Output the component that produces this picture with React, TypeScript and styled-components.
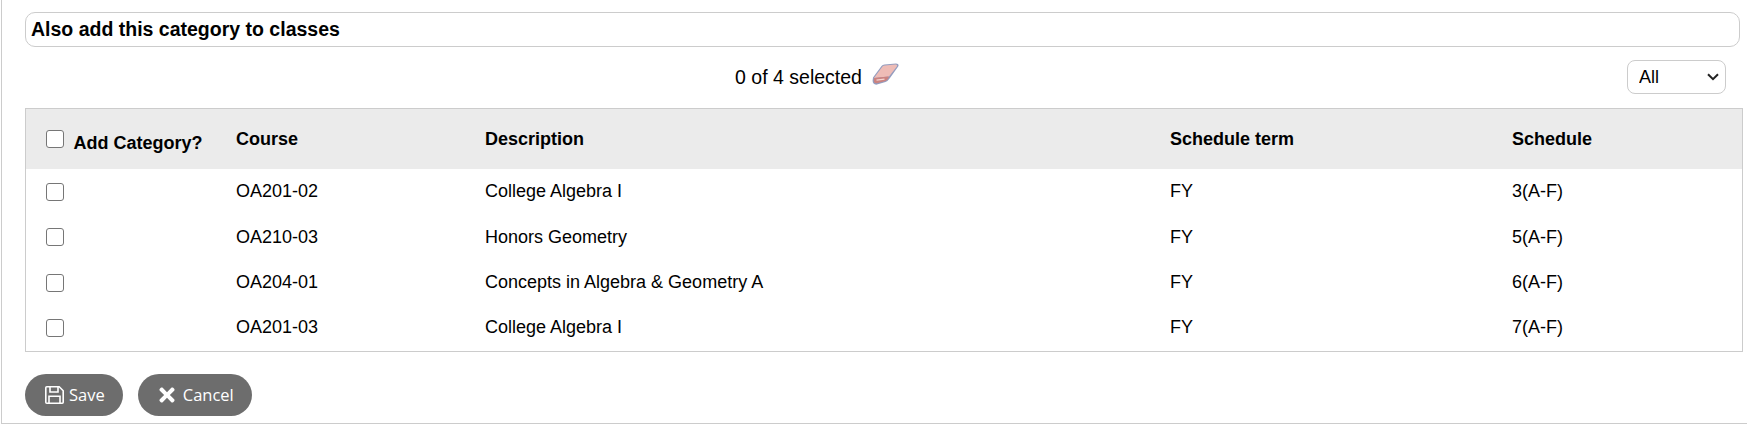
import React from 'react';
import styled, { createGlobalStyle } from 'styled-components';
import { FaTimes } from 'react-icons/fa';

const classes = [
  { course: 'OA201-02', description: 'College Algebra I', term: 'FY', schedule: '3(A-F)' },
  { course: 'OA210-03', description: 'Honors Geometry', term: 'FY', schedule: '5(A-F)' },
  { course: 'OA204-01', description: 'Concepts in Algebra & Geometry A', term: 'FY', schedule: '6(A-F)' },
  { course: 'OA201-03', description: 'College Algebra I', term: 'FY', schedule: '7(A-F)' },
];

const EraserIcon = () => (
  <svg width="27" height="22" viewBox="0 0 27 22" aria-hidden="true">
    <path d="M1 14.5 L9.5 3 Q10.5 1.5 12.5 1.4 L24 .4 Q27.6 .4 26.2 3.6 L18 15 Q16 18 13.5 19 L5 21.6 Q.6 22 .6 17.5 Z" fill="#949dbf" />
    <path d="M2 15 L10.5 3.6 Q11.3 2.6 13 2.5 L23.6 1.6 Q25.6 1.6 24.8 3.6 L17 13.4 Z" fill="#eebcb6" />
    <path d="M2 15 L16 13.6 Q17.4 13.6 16.6 15 L15 17 Q14 18 12.5 18.3 L4.8 20.2 Q1.8 20.4 1.8 18 Z" fill="#cc8380" />
    <path d="M4.5 17.2 L12.5 16.2" stroke="#f4d6d2" strokeWidth="1.3" fill="none" />
  </svg>
);

const ChevronIcon = () => (
  <svg width="12" height="8" viewBox="0 0 12 8" aria-hidden="true">
    <path d="M1 1.2 L6 6.2 L11 1.2" stroke="#222" strokeWidth="2" fill="none" />
  </svg>
);

const SaveIcon = () => (
  <svg width="19" height="18" viewBox="0 0 19 18" aria-hidden="true" fill="none" stroke="#fff" strokeWidth="1.6">
    <path d="M1.8.8 H14.2 L18.2 4.8 V16.2 Q18.2 17.2 17.2 17.2 H1.8 Q.8 17.2 .8 16.2 V1.8 Q.8 .8 1.8 .8 Z" />
    <path d="M5 1 V6 H13 V1" />
    <path d="M4 17 V10.2 H15 V17" />
  </svg>
);

const App = () => {
  return (
    <>
      <GlobalStyle />
      <Page>
        <SectionTitle>Also add this category to classes</SectionTitle>
        <SelectionBar>
          <SelectionCount>
            0 of 4 selected
            <EraserButton>
              <EraserIcon />
            </EraserButton>
          </SelectionCount>
          <FilterWrap>
            <FilterSelect defaultValue="All">
              <option>All</option>
              <option>Selected</option>
            </FilterSelect>
            <FilterArrow>
              <ChevronIcon />
            </FilterArrow>
          </FilterWrap>
        </SelectionBar>
        <TableFrame>
          <ClassTable>
            <colgroup>
              <col style={{ width: 190 }} />
              <col style={{ width: 249 }} />
              <col style={{ width: 685 }} />
              <col style={{ width: 342 }} />
              <col />
            </colgroup>
            <thead>
              <tr>
                <HeadCell>
                  <RowCheck type="checkbox" />
                  <AddLabel>Add Category?</AddLabel>
                </HeadCell>
                <HeadCell>Course</HeadCell>
                <HeadCell>Description</HeadCell>
                <HeadCell>Schedule term</HeadCell>
                <HeadCell>Schedule</HeadCell>
              </tr>
            </thead>
            <tbody>
              {classes.map((item) => (
                <tr key={item.course}>
                  <BodyCell>
                    <RowCheck type="checkbox" />
                  </BodyCell>
                  <BodyCell>{item.course}</BodyCell>
                  <BodyCell>{item.description}</BodyCell>
                  <BodyCell>{item.term}</BodyCell>
                  <BodyCell>{item.schedule}</BodyCell>
                </tr>
              ))}
            </tbody>
          </ClassTable>
        </TableFrame>
        <Actions>
          <PillButton>
            <SaveIcon />
            Save
          </PillButton>
          <PillButton>
            <FaTimes size={22} />
            Cancel
          </PillButton>
        </Actions>
      </Page>
    </>
  );
};

export default App;

// Styled Components

const GlobalStyle = createGlobalStyle`
  html, body {
    margin: 0;
    background: #fff;
    font-family: "Liberation Sans", Arial, sans-serif;
    color: #000;
  }
`;

const Page = styled.div`
  margin-left: 1px;
  height: 424px;
  box-sizing: border-box;
  border-left: 1px solid #ccc;
  border-bottom: 1px solid #ccc;
  padding: 12px 4px 0 23px;
`;

const SectionTitle = styled.div`
  box-sizing: border-box;
  height: 35px;
  margin-right: 3px;
  padding-left: 5px;
  border: 1px solid #ccc;
  border-radius: 10px;
  font-size: 19.5px;
  font-weight: bold;
  line-height: 33px;
`;

const SelectionBar = styled.div`
  display: flex;
  align-items: flex-start;
  height: 61px;
  padding-right: 17px;
`;

const SelectionCount = styled.div`
  flex: 1;
  display: flex;
  align-items: center;
  justify-content: center;
  height: 61px;
  padding-right: 18px;
  font-size: 19.5px;
`;

const EraserButton = styled.span`
  display: flex;
  margin: -7px 0 0 10px;
`;

const FilterWrap = styled.div`
  position: relative;
  margin-top: 13px;
`;

const FilterSelect = styled.select`
  display: block;
  box-sizing: border-box;
  width: 99px;
  height: 34px;
  padding: 0 0 0 11px;
  appearance: none;
  border: 1px solid #ccc;
  border-radius: 8px;
  background: #fff;
  font-family: inherit;
  font-size: 18px;
  color: #000;
`;

const FilterArrow = styled.span`
  position: absolute;
  right: 7px;
  top: 13px;
  display: flex;
  pointer-events: none;
`;

const TableFrame = styled.div`
  border: 1px solid #ccc;
`;

const ClassTable = styled.table`
  width: 100%;
  border-collapse: collapse;
  table-layout: fixed;
`;

const HeadCell = styled.th`
  height: 60px;
  padding: 0 0 0 20px;
  background: #ebebeb;
  font-size: 18px;
  font-weight: bold;
  text-align: left;
  vertical-align: middle;
  &:first-child {
    white-space: nowrap;
  }
`;

const BodyCell = styled.td`
  height: 45.4px;
  padding: 0 0 0 20px;
  font-size: 18px;
  vertical-align: middle;
`;

const RowCheck = styled.input`
  appearance: none;
  box-sizing: border-box;
  width: 18px;
  height: 18px;
  margin: -1px 0 0;
  vertical-align: middle;
  background: #fff;
  border: 1.5px solid #767676;
  border-radius: 3px;
`;

const AddLabel = styled.span`
  margin-left: 9.5px;
  position: relative;
  top: 4px;
`;

const Actions = styled.div`
  display: flex;
  gap: 15px;
  margin-top: 22px;
`;

const PillButton = styled.button`
  display: flex;
  align-items: center;
  gap: 5px;
  height: 42px;
  padding: 0 18px;
  border: 0;
  border-radius: 21px;
  background: #6d6d6d;
  color: #fff;
  font-family: "Open Sans", sans-serif;
  font-size: 16.5px;
  &:first-child {
    padding-left: 20px;
  }
`;
